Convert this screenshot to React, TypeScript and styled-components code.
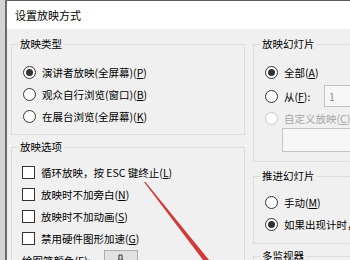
import React from "react";
import styled, { createGlobalStyle } from "styled-components";

const GlobalStyle = createGlobalStyle`
	html, body {
		margin: 0;
		padding: 0;
		background: #d6d6d6;
	}
	body {
		font-family: "Noto Sans CJK SC", "Microsoft YaHei", sans-serif;
		font-size: 10.5px;
		color: #000;
	}
`;

function App() {
	return (
		<>
			<GlobalStyle />
			<Screen>
				<Backdrop />
				<Dialog>
					<TitleBar>设置放映方式</TitleBar>
					<Body>
						<Column>
							<Group>
								<Legend>放映类型</Legend>
								<GroupBody $top={10} $bottom={7} $left={11}>
									<Option>
										<Radio $checked />
										<span>
											演讲者放映(全屏幕)(<Key>P</Key>)
										</span>
									</Option>
									<Option>
										<Radio />
										<span>
											观众自行浏览(窗口)(<Key>B</Key>)
										</span>
									</Option>
									<Option>
										<Radio />
										<span>
											在展台浏览(全屏幕)(<Key>K</Key>)
										</span>
									</Option>
								</GroupBody>
							</Group>
							<Group $gap={5}>
								<Legend>放映选项</Legend>
								<GroupBody $top={7} $bottom={8} $left={10}>
									<Option>
										<Checkbox />
										<span>
											循环放映，按 ESC 键终止(<Key>L</Key>)
										</span>
									</Option>
									<Option>
										<Checkbox />
										<span>
											放映时不加旁白(<Key>N</Key>)
										</span>
									</Option>
									<Option>
										<Checkbox />
										<span>
											放映时不加动画(<Key>S</Key>)
										</span>
									</Option>
									<Option>
										<Checkbox />
										<span>
											禁用硬件图形加速(<Key>G</Key>)
										</span>
									</Option>
									<Option>
										<PenLabel>
											绘图笔颜色(<Key>E</Key>):
										</PenLabel>
										<ColorButton>
											<svg width="8" height="10" viewBox="0 0 8 10">
												<path
													d="M2 1 L5 1 L5 5 L6 6 L1 6 L2 5 Z"
													fill="none"
													stroke="#333"
													strokeWidth="1"
												/>
											</svg>
										</ColorButton>
									</Option>
								</GroupBody>
							</Group>
						</Column>
						<Column>
							<Group>
								<Legend>放映幻灯片</Legend>
								<GroupBody $top={9} $bottom={9} $left={11}>
									<Option $height={24}>
										<Radio $checked />
										<span>
											全部(<Key>A</Key>)
										</span>
									</Option>
									<Option $height={24}>
										<Radio />
										<FromLabel>
											从(<Key>F</Key>):
										</FromLabel>
										<NumberBox>1</NumberBox>
									</Option>
									<Option $height={20} $disabled>
										<Radio $disabled />
										<span>
											自定义放映(<Key>C</Key>)
										</span>
									</Option>
									<ShowSelect />
								</GroupBody>
							</Group>
							<Group $gap={7}>
								<Legend>推进幻灯片</Legend>
								<GroupBody $top={8} $bottom={8} $left={11}>
									<Option>
										<Radio />
										<span>
											手动(<Key>M</Key>)
										</span>
									</Option>
									<Option>
										<Radio $checked />
										<span>
											如果出现计时，则使用它(<Key>U</Key>)
										</span>
									</Option>
								</GroupBody>
							</Group>
							<Group $gap={5}>
								<Legend>多监视器</Legend>
								<GroupBody $top={8} $bottom={8} $left={11}>
									<Option>
										<span>
											幻灯片放映监视器(<Key>O</Key>):
										</span>
									</Option>
								</GroupBody>
							</Group>
						</Column>
					</Body>
				</Dialog>
				<Arrow width="350" height="260" viewBox="0 0 350 260">
					<polygon points="144,182 145.5,182 209,260 203,260" fill="#cf3a3a" />
				</Arrow>
			</Screen>
		</>
	);
}

const Screen = styled.div`
	position: relative;
	width: 350px;
	height: 260px;
	overflow: hidden;
	display: flex;
	background: #d6d6d6;
`;

const Backdrop = styled.div`
	flex: none;
	width: 5px;
	background: #d4d4d4;
	border-right: 2px solid #6b6b6b;
`;

const Dialog = styled.div`
	flex: 1;
	min-width: 0;
	display: flex;
	flex-direction: column;
	border-top: 1px solid #5e5e5e;
`;

const TitleBar = styled.div`
	flex: none;
	height: 27px;
	display: flex;
	align-items: center;
	padding-left: 8px;
	padding-bottom: 1px;
	background: #fff;
	font-size: 11px;
`;

const Body = styled.div`
	flex: 1;
	display: grid;
	grid-template-columns: 234px 160px;
	column-gap: 8px;
	align-items: start;
	padding: 8px 0 0 4px;
	background: #f0f0f0;
`;

const Column = styled.div`
	display: flex;
	flex-direction: column;
`;

const Group = styled.fieldset<{ $gap?: number }>`
	margin: ${(p) => p.$gap ?? 0}px 0 0 0;
	padding: 0;
	min-width: 0;
	border: 1px solid #dcdcdc;
`;

const Legend = styled.legend`
	margin-left: 6px;
	padding: 0 2px;
	line-height: 14px;
	white-space: nowrap;
`;

const GroupBody = styled.div<{ $top: number; $bottom: number; $left: number }>`
	display: flex;
	flex-direction: column;
	padding: ${(p) => `${p.$top}px 0 ${p.$bottom}px ${p.$left}px`};
`;

const Option = styled.div<{ $height?: number; $disabled?: boolean }>`
	display: flex;
	align-items: center;
	gap: 6px;
	height: ${(p) => p.$height ?? 22}px;
	white-space: nowrap;
	color: ${(p) => (p.$disabled ? "#a6a6a6" : "#000")};
`;

const Key = styled.span`
	text-decoration: underline;
`;

const Radio = styled.span<{ $checked?: boolean; $disabled?: boolean }>`
	flex: none;
	box-sizing: border-box;
	width: 13px;
	height: 13px;
	border-radius: 50%;
	border: 1px solid ${(p) => (p.$disabled ? "#c6c6c6" : "#333")};
	background: #fff;
	display: flex;
	align-items: center;
	justify-content: center;

	&::after {
		content: "";
		display: ${(p) => (p.$checked ? "block" : "none")};
		width: 7px;
		height: 7px;
		border-radius: 50%;
		background: #333;
	}
`;

const Checkbox = styled.span`
	flex: none;
	box-sizing: border-box;
	width: 13px;
	height: 13px;
	border: 1px solid #333;
	background: #fff;
`;

const FromLabel = styled.span`
	width: 30px;
`;

const NumberBox = styled.div`
	flex: none;
	box-sizing: border-box;
	width: 70px;
	height: 22px;
	margin-left: 4px;
	padding-left: 4px;
	display: flex;
	align-items: center;
	border: 1px solid #c4c4c4;
	background: #f7f7f7;
	color: #8c8c8c;
`;

const ShowSelect = styled.div`
	box-sizing: border-box;
	height: 24px;
	margin-left: 17px;
	border: 1px solid #c4c4c4;
	background: #f7f7f7;
`;

const PenLabel = styled.span`
	width: 76px;
`;

const ColorButton = styled.div`
	flex: none;
	box-sizing: border-box;
	width: 34px;
	height: 20px;
	display: flex;
	justify-content: center;
	padding-top: 3px;
	border: 1px solid #adadad;
	background: #e1e1e1;
`;

const Arrow = styled.svg`
	position: absolute;
	left: 0;
	top: 0;
	pointer-events: none;
`;

export default App;
